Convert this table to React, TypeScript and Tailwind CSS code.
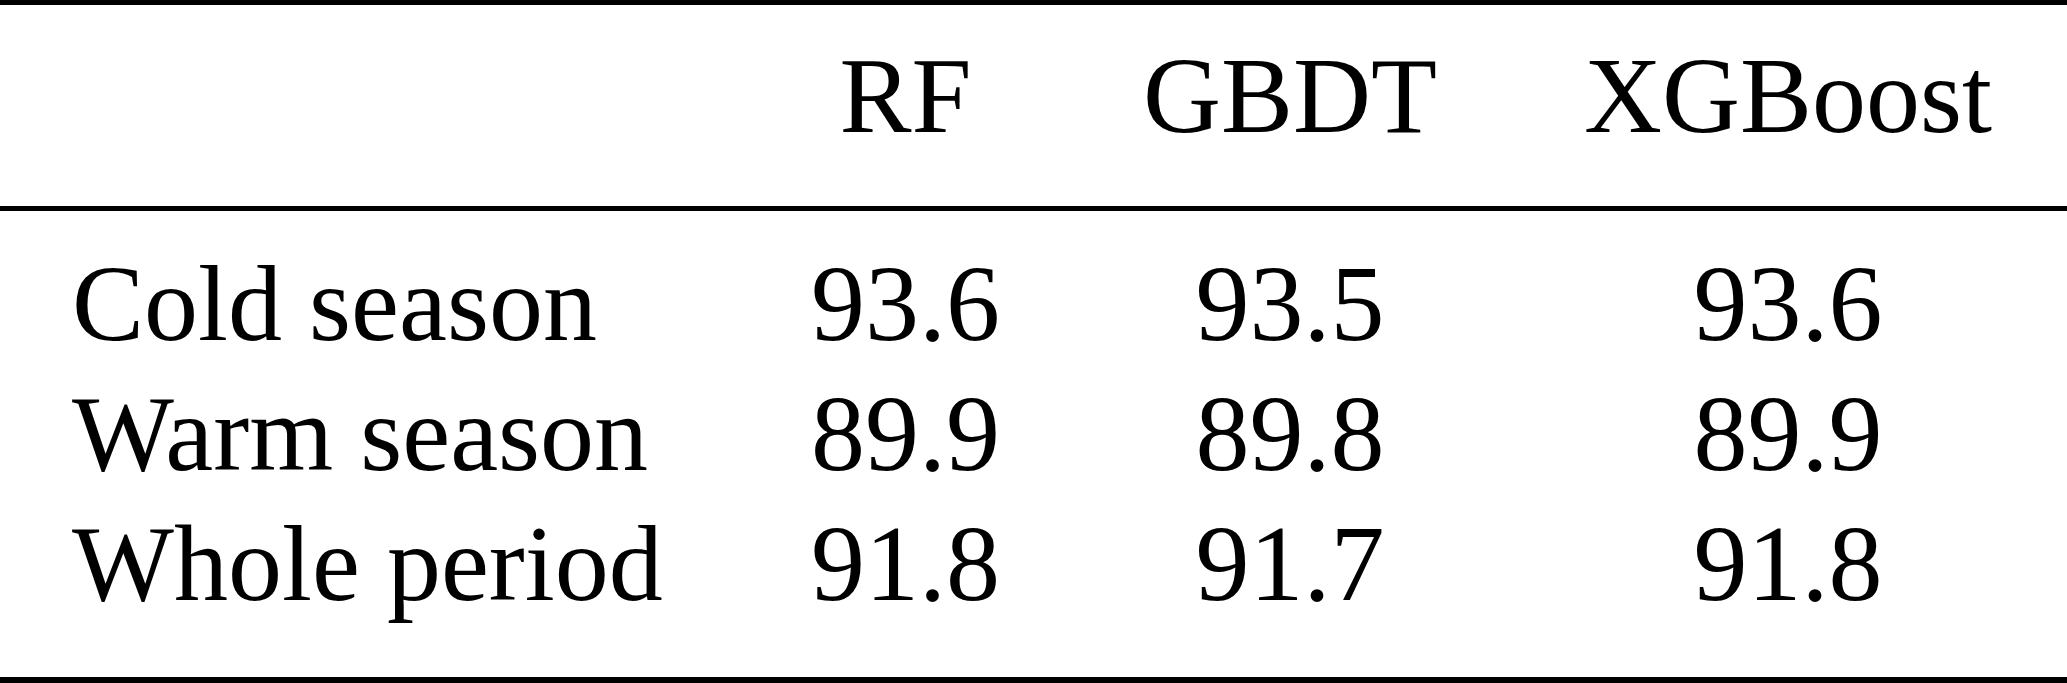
const models = ['RF', 'GBDT', 'XGBoost'];

const rows = [
  { label: 'Cold season', values: ['93.6', '93.5', '93.6'] },
  { label: 'Warm season', values: ['89.9', '89.8', '89.9'] },
  { label: 'Whole period', values: ['91.8', '91.7', '91.8'] },
];

export default function App() {
  return (
    <div className="w-[2067px] h-[683px] bg-white text-black text-[108px] leading-[130px]">
      {/* Accuracy table */}
      <div className="border-t-[5px] border-b-[6px] border-black">
        <div className="grid grid-cols-[740px_331px_438px_1fr] border-b-[5px] border-black pt-[26px] pb-[45px]">
          <div />
          {models.map((m) => (
            <div key={m} className="font-['Liberation_Serif'] text-center whitespace-nowrap">
              {m}
            </div>
          ))}
        </div>
        <div className="flex flex-col pt-[28px] pb-[48px]">
          {rows.map((row) => (
            <div key={row.label} className="grid grid-cols-[740px_331px_438px_1fr]">
              <div className="font-['Liberation_Serif'] pl-[72px] whitespace-nowrap">{row.label}</div>
              {row.values.map((v, j) => (
                <div key={j} className="font-['Liberation_Serif'] text-center">
                  {v}
                </div>
              ))}
            </div>
          ))}
        </div>
      </div>
    </div>
  );
}
